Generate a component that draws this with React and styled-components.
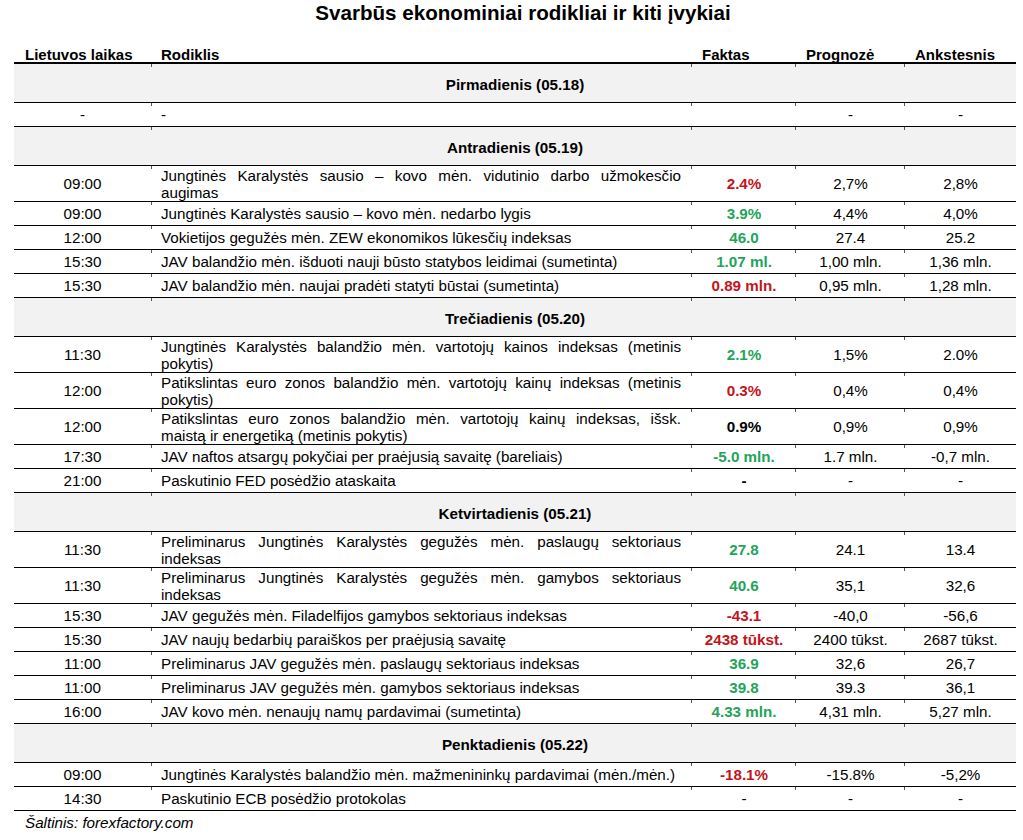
import React from "react";
import styled, { createGlobalStyle, css } from "styled-components";

const Global = createGlobalStyle`
  html, body { margin: 0; padding: 0; background: #fff; }
  body {
    font-family: "Liberation Sans", Arial, sans-serif;
    color: #000;
  }
`;

const COLS = "137px 541px 104px 109px 111px";

const Page = styled.div`
  width: 1002px;
  padding: 1px 7px 0 14px;
`;

const Title = styled.h1`
  margin: 0 0 23px;
  padding-left: 16px;
  font-size: 20.6px;
  line-height: 24px;
  font-weight: bold;
  text-align: center;
`;

const ticks = css`
  background-image:
    linear-gradient(#555, #555),
    linear-gradient(#555, #555),
    linear-gradient(#555, #555),
    linear-gradient(#555, #555);
  background-size: 1px 3px;
  background-repeat: no-repeat;
  background-position: 137px 0, 677px 0, 781px 0, 890px 0;
`;

const HeaderRow = styled.div`
  display: grid;
  grid-template-columns: ${COLS};
  border-bottom: 2px solid #000;
  font-weight: bold;
  font-size: 15px;
  line-height: 14px;
`;

const HeaderCell = styled.div`
  padding-left: ${(p) => (p.$first ? "11px" : "10px")};
  white-space: nowrap;
`;

const Row = styled.div`
  display: grid;
  grid-template-columns: ${COLS};
  align-items: center;
  box-sizing: border-box;
  min-height: ${(p) => (p.$tall ? "36px" : "24px")};
  border-bottom: 1px solid #000;
  font-size: 15.2px;
  line-height: 16.5px;
  ${ticks};
  background-color: #fff;
`;

const DayRow = styled.div`
  display: flex;
  align-items: center;
  justify-content: center;
  box-sizing: border-box;
  min-height: 39px;
  padding-top: 3px;
  border-bottom: 1px solid #000;
  font-size: 15.2px;
  font-weight: bold;
  line-height: 17px;
  ${ticks};
  background-color: #f2f2f2;
`;

const Cell = styled.div`
  padding-top: 2px;
  text-align: center;
`;

const Desc = styled.div`
  padding: 2px 11px 0 10px;
  text-align: left;
`;

const JustLine = styled.span`
  display: block;
  text-align: justify;
  text-align-last: justify;
`;

const PlainLine = styled.span`
  display: block;
`;

const toneColor = { red: "#c3141c", green: "#22a45a", bold: "#000" };

const Value = styled(Cell)`
  font-weight: ${(p) => (p.$tone ? "bold" : "normal")};
  color: ${(p) => (p.$tone ? toneColor[p.$tone] : "#000")};
`;

const Footer = styled.div`
  margin-top: 3px;
  padding-left: 11px;
  font-style: italic;
  font-size: 15.2px;
  line-height: 17px;
`;

const data = [
  {
    day: "Pirmadienis (05.18)",
    rows: [["-", "-", "", "-", "-"]],
  },
  {
    day: "Antradienis (05.19)",
    rows: [
      ["09:00", ["Jungtinės Karalystės sausio – kovo mėn. vidutinio darbo užmokesčio", "augimas"], ["2.4%", "red"], "2,7%", "2,8%"],
      ["09:00", "Jungtinės Karalystės sausio – kovo mėn. nedarbo lygis", ["3.9%", "green"], "4,4%", "4,0%"],
      ["12:00", "Vokietijos gegužės mėn. ZEW ekonomikos lūkesčių indeksas", ["46.0", "green"], "27.4", "25.2"],
      ["15:30", "JAV balandžio mėn. išduoti nauji būsto statybos leidimai (sumetinta)", ["1.07 ml.", "green"], "1,00 mln.", "1,36 mln."],
      ["15:30", "JAV balandžio mėn. naujai pradėti statyti būstai (sumetinta)", ["0.89 mln.", "red"], "0,95 mln.", "1,28 mln."],
    ],
  },
  {
    day: "Trečiadienis (05.20)",
    rows: [
      ["11:30", ["Jungtinės Karalystės balandžio mėn. vartotojų kainos indeksas (metinis", "pokytis)"], ["2.1%", "green"], "1,5%", "2.0%"],
      ["12:00", ["Patikslintas euro zonos balandžio mėn. vartotojų kainų indeksas (metinis", "pokytis)"], ["0.3%", "red"], "0,4%", "0,4%"],
      ["12:00", ["Patikslintas euro zonos balandžio mėn. vartotojų kainų indeksas, išsk.", "maistą ir energetiką (metinis pokytis)"], ["0.9%", "bold"], "0,9%", "0,9%"],
      ["17:30", "JAV naftos atsargų pokyčiai per praėjusią savaitę (bareliais)", ["-5.0 mln.", "green"], "1.7 mln.", "-0,7 mln."],
      ["21:00", "Paskutinio FED posėdžio ataskaita", ["-", "bold"], "-", "-"],
    ],
  },
  {
    day: "Ketvirtadienis (05.21)",
    rows: [
      ["11:30", ["Preliminarus Jungtinės Karalystės gegužės mėn. paslaugų sektoriaus", "indeksas"], ["27.8", "green"], "24.1", "13.4"],
      ["11:30", ["Preliminarus Jungtinės Karalystės gegužės mėn. gamybos sektoriaus", "indeksas"], ["40.6", "green"], "35,1", "32,6"],
      ["15:30", "JAV gegužės mėn. Filadelfijos gamybos sektoriaus indeksas", ["-43.1", "red"], "-40,0", "-56,6"],
      ["15:30", "JAV naujų bedarbių paraiškos per praėjusią savaitę", ["2438 tūkst.", "red"], "2400 tūkst.", "2687 tūkst."],
      ["11:00", "Preliminarus JAV gegužės mėn. paslaugų sektoriaus indeksas", ["36.9", "green"], "32,6", "26,7"],
      ["11:00", "Preliminarus JAV gegužės mėn. gamybos sektoriaus indeksas", ["39.8", "green"], "39.3", "36,1"],
      ["16:00", "JAV kovo mėn. nenaujų namų pardavimai (sumetinta)", ["4.33 mln.", "green"], "4,31 mln.", "5,27 mln."],
    ],
  },
  {
    day: "Penktadienis (05.22)",
    rows: [
      ["09:00", "Jungtinės Karalystės balandžio mėn. mažmenininkų pardavimai (mėn./mėn.)", ["-18.1%", "red"], "-15.8%", "-5,2%"],
      ["14:30", "Paskutinio ECB posėdžio protokolas", "-", "-", "-"],
    ],
  },
];

function Description({ text }) {
  if (Array.isArray(text)) {
    return (
      <Desc>
        <JustLine>{text[0]}</JustLine>
        <PlainLine>{text[1]}</PlainLine>
      </Desc>
    );
  }
  return <Desc>{text}</Desc>;
}

function Fact({ v }) {
  if (Array.isArray(v)) return <Value $tone={v[1]}>{v[0]}</Value>;
  return <Value>{v}</Value>;
}

export default function App() {
  return (
    <Page>
      <Global />
      <Title>Svarbūs ekonominiai rodikliai ir kiti įvykiai</Title>
      <HeaderRow>
        <HeaderCell $first>Lietuvos laikas</HeaderCell>
        <HeaderCell>Rodiklis</HeaderCell>
        <HeaderCell>Faktas</HeaderCell>
        <HeaderCell>Prognozė</HeaderCell>
        <HeaderCell>Ankstesnis</HeaderCell>
      </HeaderRow>
      {data.map((section) => (
        <React.Fragment key={section.day}>
          <DayRow>{section.day}</DayRow>
          {section.rows.map((r, i) => (
            <Row key={i} $tall={Array.isArray(r[1])}>
              <Cell>{r[0]}</Cell>
              <Description text={r[1]} />
              <Fact v={r[2]} />
              <Value>{r[3]}</Value>
              <Value>{r[4]}</Value>
            </Row>
          ))}
        </React.Fragment>
      ))}
      <Footer>Šaltinis: forexfactory.com</Footer>
    </Page>
  );
}
